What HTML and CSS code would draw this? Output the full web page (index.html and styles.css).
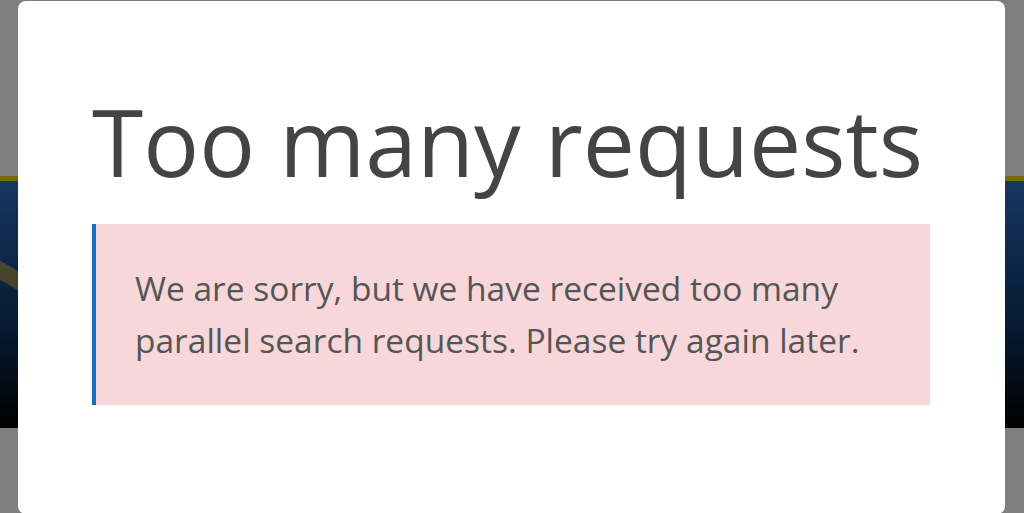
FILE: index.html
```html
<!DOCTYPE html>
<html lang="en">
<head>
<meta charset="utf-8">
<title>Too many requests</title>
<link rel="stylesheet" href="styles.css">
</head>
<body>
<div class="page">
  <header class="site-header"></header>
  <section class="banner">
    <div class="swoosh"></div>
  </section>
  <main class="site-main"></main>
</div>
<div class="overlay">
  <div class="modal">
    <h1 class="modal-title">Too many requests</h1>
    <div class="alert">
      <p class="alert-text">We are sorry, but we have received too many parallel search requests. Please try again later.</p>
    </div>
  </div>
</div>
</body>
</html>
```

FILE: styles.css
```css
* { box-sizing: border-box; }
html, body {
  margin: 0;
  padding: 0;
  height: 100%;
  overflow: hidden;
}
body {
  font-family: "Open Sans", "Noto Sans", sans-serif;
  background: #ffffff;
}
.page {
  display: flex;
  flex-direction: column;
  height: 513px;
}
.site-header {
  background: #ffffff;
  border-bottom: 5px solid #f2d21a;
  flex: none;
  height: 181px;
}
.banner {
  position: relative;
  height: 247px;
  flex: none;
  overflow: hidden;
  background: linear-gradient(180deg, #2f6ec6 0%, #1a4f93 30%, #0f3461 60%, #061426 85%, #000000 100%);
}
.swoosh {
  position: absolute;
  left: -120px;
  top: 70px;
  width: 170px;
  height: 120px;
  border-radius: 50%;
  border-top: 18px solid rgba(220, 180, 60, 0.6);
  transform: rotate(18deg);
}
.site-main {
  flex: 1;
  background: #ffffff;
}
.overlay {
  position: fixed;
  inset: 0;
  background: rgba(0, 0, 0, 0.5);
}
.modal {
  position: absolute;
  left: 18px;
  top: 1px;
  width: 987px;
  height: 513px;
  background: #ffffff;
  border-radius: 8px;
  padding: 87px 75px 0 74px;
}
.modal-title {
  margin: 0 0 30px;
  font-weight: 400;
  font-size: 93px;
  line-height: 106px;
  color: #444444;
  letter-spacing: 0;
}
.alert {
  background: #f8d7da;
  border-left: 4px solid #1b6db4;
  padding: 38px 40px 38px 39px;
  height: 181px;
}
.alert-text {
  margin: 0;
  font-size: 33.5px;
  line-height: 52px;
  color: #555555;
}
```
